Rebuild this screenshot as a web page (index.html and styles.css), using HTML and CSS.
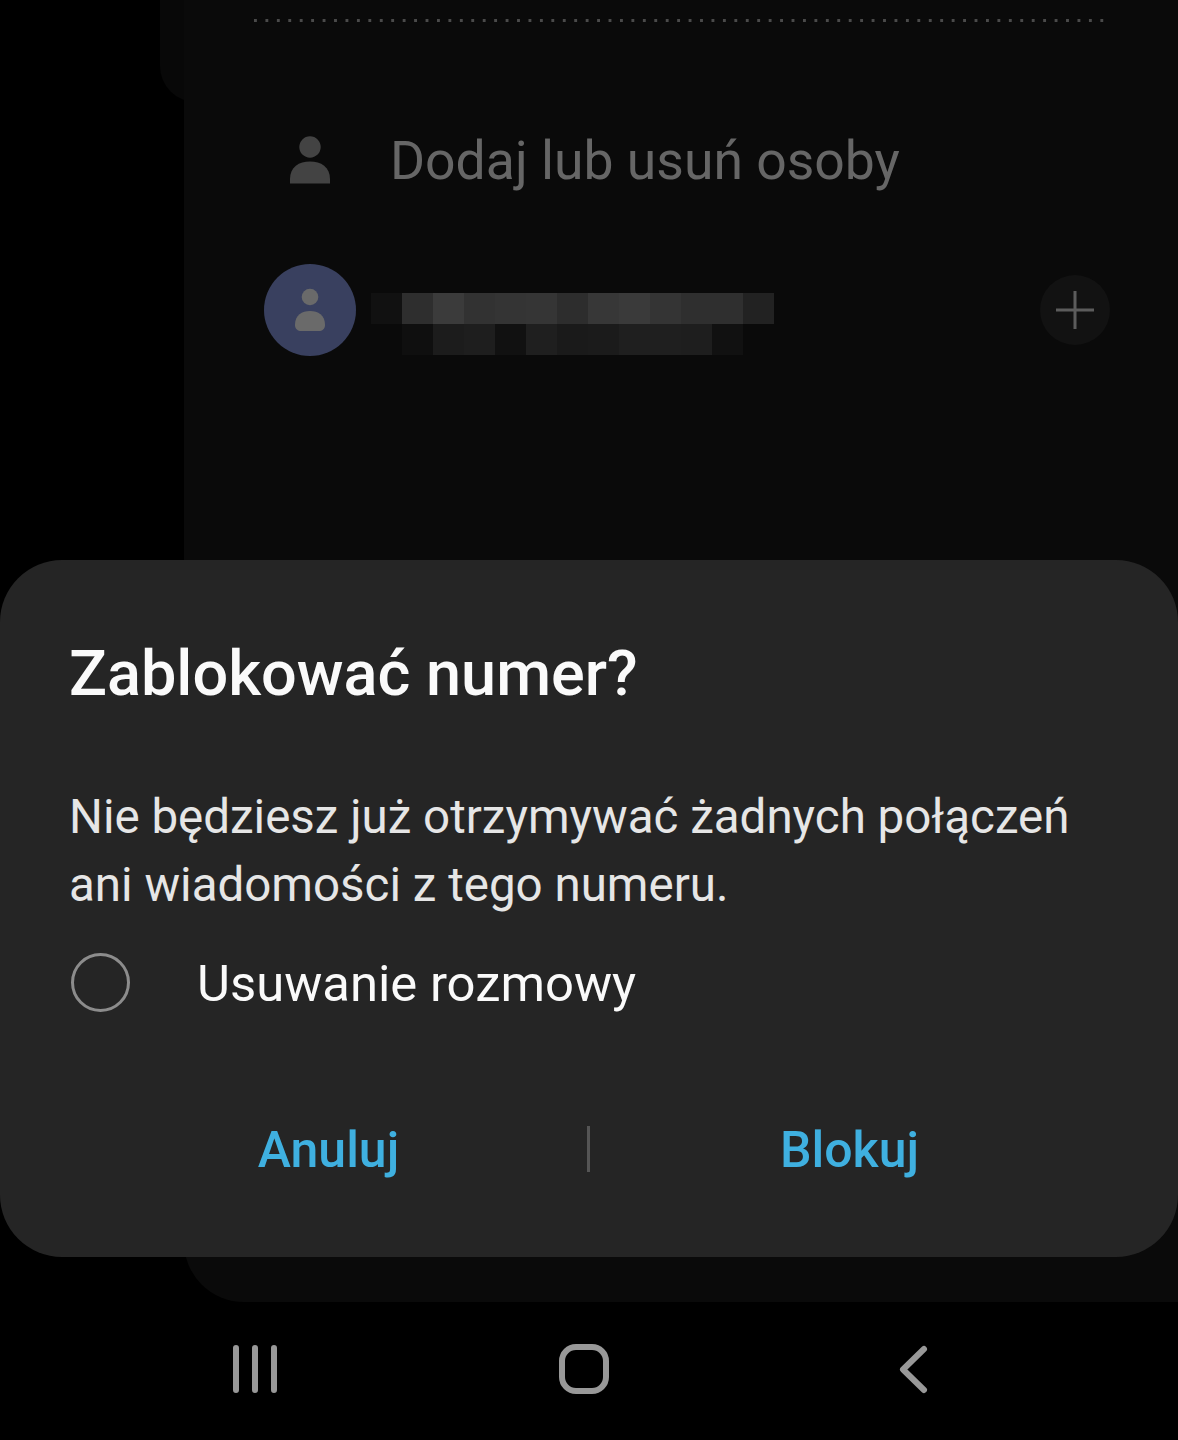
FILE: index.html
```html
<!DOCTYPE html>
<html lang="pl">
<head>
    <meta charset="UTF-8">
    <meta name="viewport" content="width=device-width, initial-scale=1.0">
    <title>Zablokować numer?</title>
    <link rel="stylesheet" href="styles.css">
</head>
<body>

<div class="screen">
    <div class="back-tab"></div>

    <div class="panel">
        <div class="dots"></div>

        <div class="add-row">
            <svg class="person" viewBox="0 0 42 48">
                <circle cx="21" cy="11" r="10.7" fill="#434343"/>
                <path d="M1 47.5 V43 C1 31 10 25.5 21 25.5 C32 25.5 41 31 41 43 V47.5 Z" fill="#434343"/>
            </svg>
            <span class="add-label">Dodaj lub usuń osoby</span>
        </div>

        <div class="contact-row">
            <div class="avatar">
                <svg viewBox="0 0 32 44" class="avatar-icon">
                    <circle cx="16" cy="9" r="8.3" fill="#6a6a6a"/>
                    <path d="M1 37 C1 27 8 23 16 23 C24 23 31 27 31 37 C31 41 28 43 25 43 H7 C4 43 1 41 1 37 Z" fill="#6a6a6a"/>
                </svg>
            </div>
            <div class="pixels">
                <div class="pixel-row">
                    <i class="s11"></i><i class="s2c"></i><i class="s3a"></i><i class="s2f"></i><i class="s32"></i><i class="s33"></i><i class="s2b"></i><i class="s36"></i><i class="s39"></i><i class="s32"></i><i class="s2e"></i><i class="s2e"></i><i class="s22"></i>
                </div>
                <div class="pixel-row indent">
                    <i class="s0f"></i><i class="s1c"></i><i class="s1e"></i><i class="s11"></i><i class="s1f"></i><i class="s1a"></i><i class="s1b"></i><i class="s1f"></i><i class="s1f"></i><i class="s1e"></i><i class="s11"></i>
                </div>
            </div>
            <div class="plus">
                <svg viewBox="0 0 38 38" class="plus-icon">
                    <path d="M19 0 V38 M0 19 H38" stroke="#5c5c5c" stroke-width="3" fill="none"/>
                </svg>
            </div>
        </div>
    </div>

    <div class="dialog">
        <h1 class="dialog-title">Zablokować numer?</h1>
        <p class="dialog-text">Nie będziesz już otrzymywać żadnych połączeń ani wiadomości z tego numeru.</p>
        <div class="option">
            <span class="radio"></span>
            <span class="option-label">Usuwanie rozmowy</span>
        </div>
        <div class="actions">
            <button class="action">Anuluj</button>
            <span class="divider"></span>
            <button class="action">Blokuj</button>
        </div>
    </div>

    <nav class="navbar">
        <svg class="nav-icon" viewBox="0 0 60 60">
            <path d="M11 9 V51 M30 9 V51 M49 9 V51" stroke="#989898" stroke-width="6" stroke-linecap="round" fill="none"/>
        </svg>
        <svg class="nav-icon" viewBox="0 0 60 60">
            <rect x="8" y="8" width="44" height="44" rx="14" stroke="#989898" stroke-width="6" fill="none"/>
        </svg>
        <svg class="nav-icon" viewBox="0 0 60 60">
            <path d="M41 10 L20 30.5 L41 51" stroke="#989898" stroke-width="6" stroke-linecap="round" stroke-linejoin="round" fill="none"/>
        </svg>
    </nav>
</div>

</body>
</html>
```

FILE: styles.css
```css
* {
    box-sizing: border-box;
}
body {
    margin: 0;
    background-color: #000;
    font-family: Roboto, "Noto Sans", sans-serif;
}
.screen {
    position: relative;
    width: 1178px;
    height: 1440px;
    display: flex;
    flex-direction: column;
    overflow: hidden;
    background-color: #000;
}
.back-tab {
    position: absolute;
    top: 0;
    left: 160px;
    width: 60px;
    height: 102px;
    background-color: #080808;
    border-bottom-left-radius: 36px;
}
.panel {
    position: relative;
    height: 1302px;
    margin-left: 184px;
    padding: 19px 68px 0 70px;
    background-color: #0a0a0a;
    border-bottom-left-radius: 60px;
}
.dots {
    height: 3px;
    margin-right: 2px;
    background-image: linear-gradient(to right, #4a4a4a 3px, transparent 3px);
    background-size: 11.45px 3px;
}
.add-row {
    display: flex;
    align-items: center;
    margin-top: 108px;
    height: 60px;
    padding-left: 35px;
}
.person {
    width: 42px;
    height: 48px;
}
.add-label {
    margin-left: 59px;
    font-size: 53.5px;
    color: #666;
    white-space: nowrap;
}
.contact-row {
    display: flex;
    align-items: center;
    margin-top: 74px;
    padding-left: 10px;
}
.avatar {
    width: 92px;
    height: 92px;
    border-radius: 50%;
    background-color: #39405f;
    display: flex;
    align-items: center;
    justify-content: center;
    flex-shrink: 0;
}
.avatar-icon {
    width: 32px;
    height: 44px;
}
.pixels {
    margin-left: 15px;
    margin-top: 28px;
    display: flex;
    flex-direction: column;
}
.pixel-row {
    display: flex;
    height: 31px;
}
.pixel-row i {
    display: block;
    width: 31px;
}
.indent {
    margin-left: 31px;
}
.s0f { background-color: #0f0f0f; }
.s11 { background-color: #111; }
.s1a { background-color: #1a1a1a; }
.s1b { background-color: #1b1b1b; }
.s1c { background-color: #1c1c1c; }
.s1e { background-color: #1e1e1e; }
.s1f { background-color: #1f1f1f; }
.s22 { background-color: #222; }
.s2b { background-color: #2d2d2d; }
.s2c { background-color: #2e2e2e; }
.s2e { background-color: #2f2f2f; }
.s2f { background-color: #323232; }
.s32 { background-color: #343434; }
.s33 { background-color: #353535; }
.s36 { background-color: #373737; }
.s39 { background-color: #3a3a3a; }
.s3a { background-color: #3b3b3b; }
.plus {
    margin-left: auto;
    width: 70px;
    height: 70px;
    border-radius: 50%;
    background-color: #121212;
    display: flex;
    align-items: center;
    justify-content: center;
}
.plus-icon {
    width: 38px;
    height: 38px;
}
.dialog {
    position: absolute;
    top: 560px;
    left: 0;
    width: 1178px;
    height: 697px;
    padding: 76px 69px 0;
    background-color: #252525;
    border-radius: 62px;
    color: #fafafa;
}
.dialog-title {
    margin: 0;
    font-size: 63px;
    font-weight: 500;
    line-height: 76px;
    white-space: nowrap;
}
.dialog-text {
    margin: 71px 0 0;
    font-size: 47.5px;
    line-height: 68px;
    color: #e6e6e6;
}
.option {
    display: flex;
    align-items: center;
    height: 68px;
    margin-top: 30px;
}
.radio {
    width: 59px;
    height: 59px;
    margin-left: 2px;
    margin-top: -2px;
    border: 3px solid #8c8c8c;
    border-radius: 50%;
    flex-shrink: 0;
}
.option-label {
    margin-left: 67px;
    font-size: 50.8px;
}
.actions {
    display: flex;
    align-items: center;
    margin-top: 100px;
    height: 66px;
}
.action {
    flex: 1;
    padding: 0;
    border: none;
    background: none;
    font-family: inherit;
    font-size: 50px;
    font-weight: 500;
    color: #3fb0e0;
}
.divider {
    width: 3px;
    height: 46px;
    margin-left: -1px;
    margin-top: -2px;
    background-color: #555;
}
.navbar {
    display: grid;
    grid-template-columns: repeat(3, 329px);
    justify-items: center;
    align-items: center;
    height: 138px;
    padding-left: 90px;
}
.nav-icon {
    width: 60px;
    height: 60px;
    margin-top: -4px;
}
```
